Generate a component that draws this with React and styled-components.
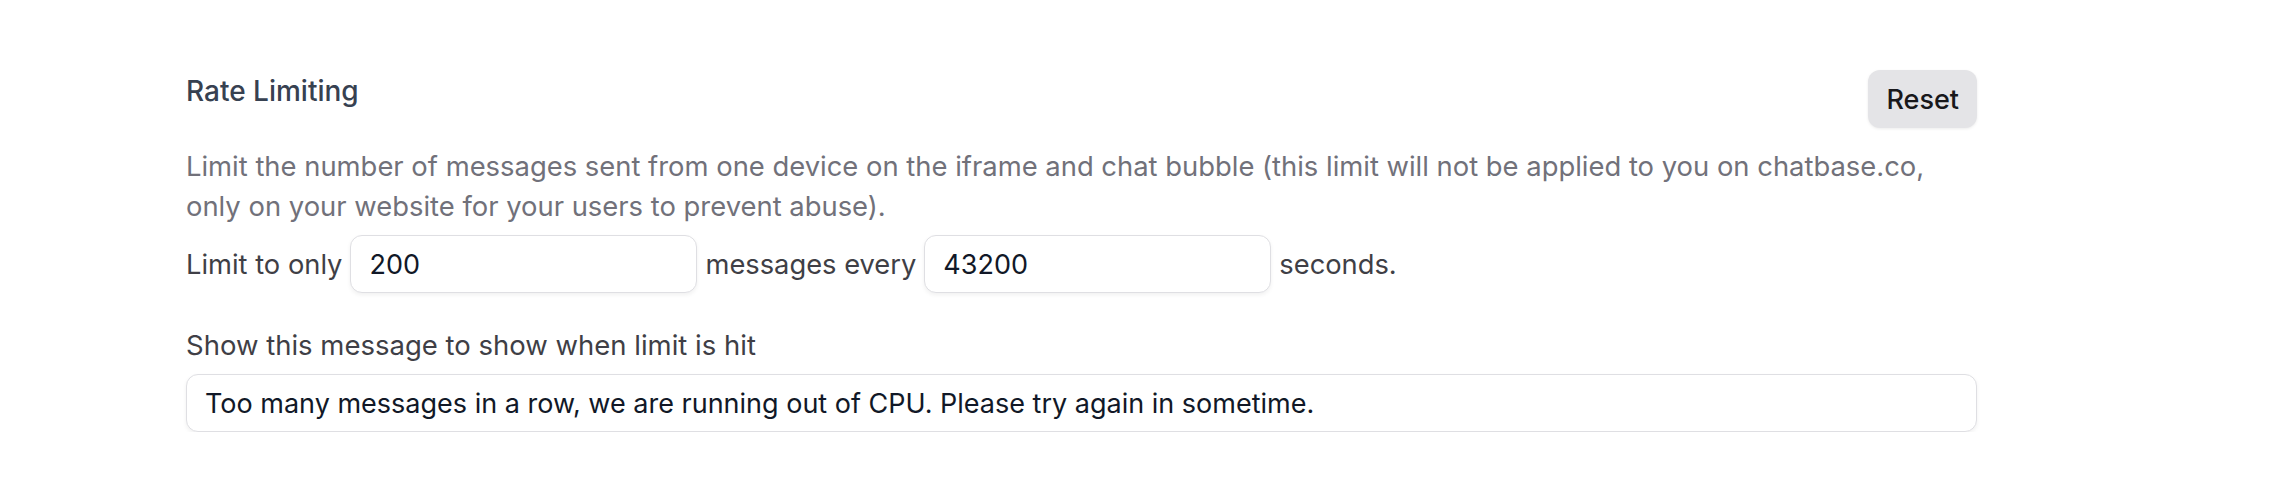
import React from 'react';
import styled, { createGlobalStyle } from 'styled-components';

const GlobalStyle = createGlobalStyle`
    html, body {
        margin: 0;
        padding: 0;
        background: #ffffff;
    }
    body {
        font-family: Inter, "Noto Sans", sans-serif;
        -webkit-font-smoothing: antialiased;
    }
`;

const Page = styled.div`
    padding: 70px 0 0 186px;
`;

const Section = styled.section`
    width: 1791px;
    display: flex;
    flex-direction: column;
`;

const Header = styled.div`
    display: flex;
    justify-content: space-between;
    align-items: flex-start;
`;

const Title = styled.h3`
    margin: 0;
    font-size: 28px;
    line-height: 42px;
    font-weight: 500;
    color: #374151;
`;

const ResetButton = styled.button`
    height: 58px;
    padding: 0 18px;
    border: none;
    border-radius: 12px;
    background: #e4e4e7;
    color: #18181b;
    font-family: inherit;
    font-size: 27px;
    font-weight: 500;
    box-shadow: 0 1px 3px rgba(0, 0, 0, 0.08);
    cursor: pointer;
`;

const Description = styled.p`
    margin: 18px 0 0 0;
    font-size: 27.4px;
    line-height: 40px;
    color: #71717a;
`;

const LimitRow = styled.div`
    display: flex;
    align-items: center;
    gap: 8px;
    margin-top: 9px;
`;

const RowText = styled.span`
    font-size: 27.3px;
    color: #3f3f46;
    white-space: nowrap;
`;

const Field = styled.input`
    box-sizing: border-box;
    height: 58px;
    width: ${(p) => p.$width || '100%'};
    padding: 0 18px;
    border: 1.5px solid #dfdfe3;
    border-radius: 12px;
    background: #ffffff;
    box-shadow: 0 2px 4px rgba(0, 0, 0, 0.06);
    font-family: inherit;
    font-size: 27px;
    color: #111827;
    outline: none;
`;

const FieldLabel = styled.label`
    margin-top: 32px;
    font-size: 27.5px;
    line-height: 40px;
    color: #3f3f46;
`;

const MessageField = styled(Field)`
    margin-top: 9px;
`;

const App = () => {
    return (
        <>
            <GlobalStyle />
            <Page>
                <Section>
                    <Header>
                        <Title>Rate Limiting</Title>
                        <ResetButton>Reset</ResetButton>
                    </Header>
                    <Description>
                        Limit the number of messages sent from one device on the iframe and chat bubble (this limit will not be applied to you on chatbase.co, only on your website for your users to prevent abuse).
                    </Description>
                    <LimitRow>
                        <RowText>Limit to only</RowText>
                        <Field $width='347px' defaultValue='200' />
                        <RowText>messages every</RowText>
                        <Field $width='347px' defaultValue='43200' />
                        <RowText>seconds.</RowText>
                    </LimitRow>
                    <FieldLabel>Show this message to show when limit is hit</FieldLabel>
                    <MessageField defaultValue='Too many messages in a row, we are running out of CPU. Please try again in sometime.' />
                </Section>
            </Page>
        </>
    );
};

export default App;
